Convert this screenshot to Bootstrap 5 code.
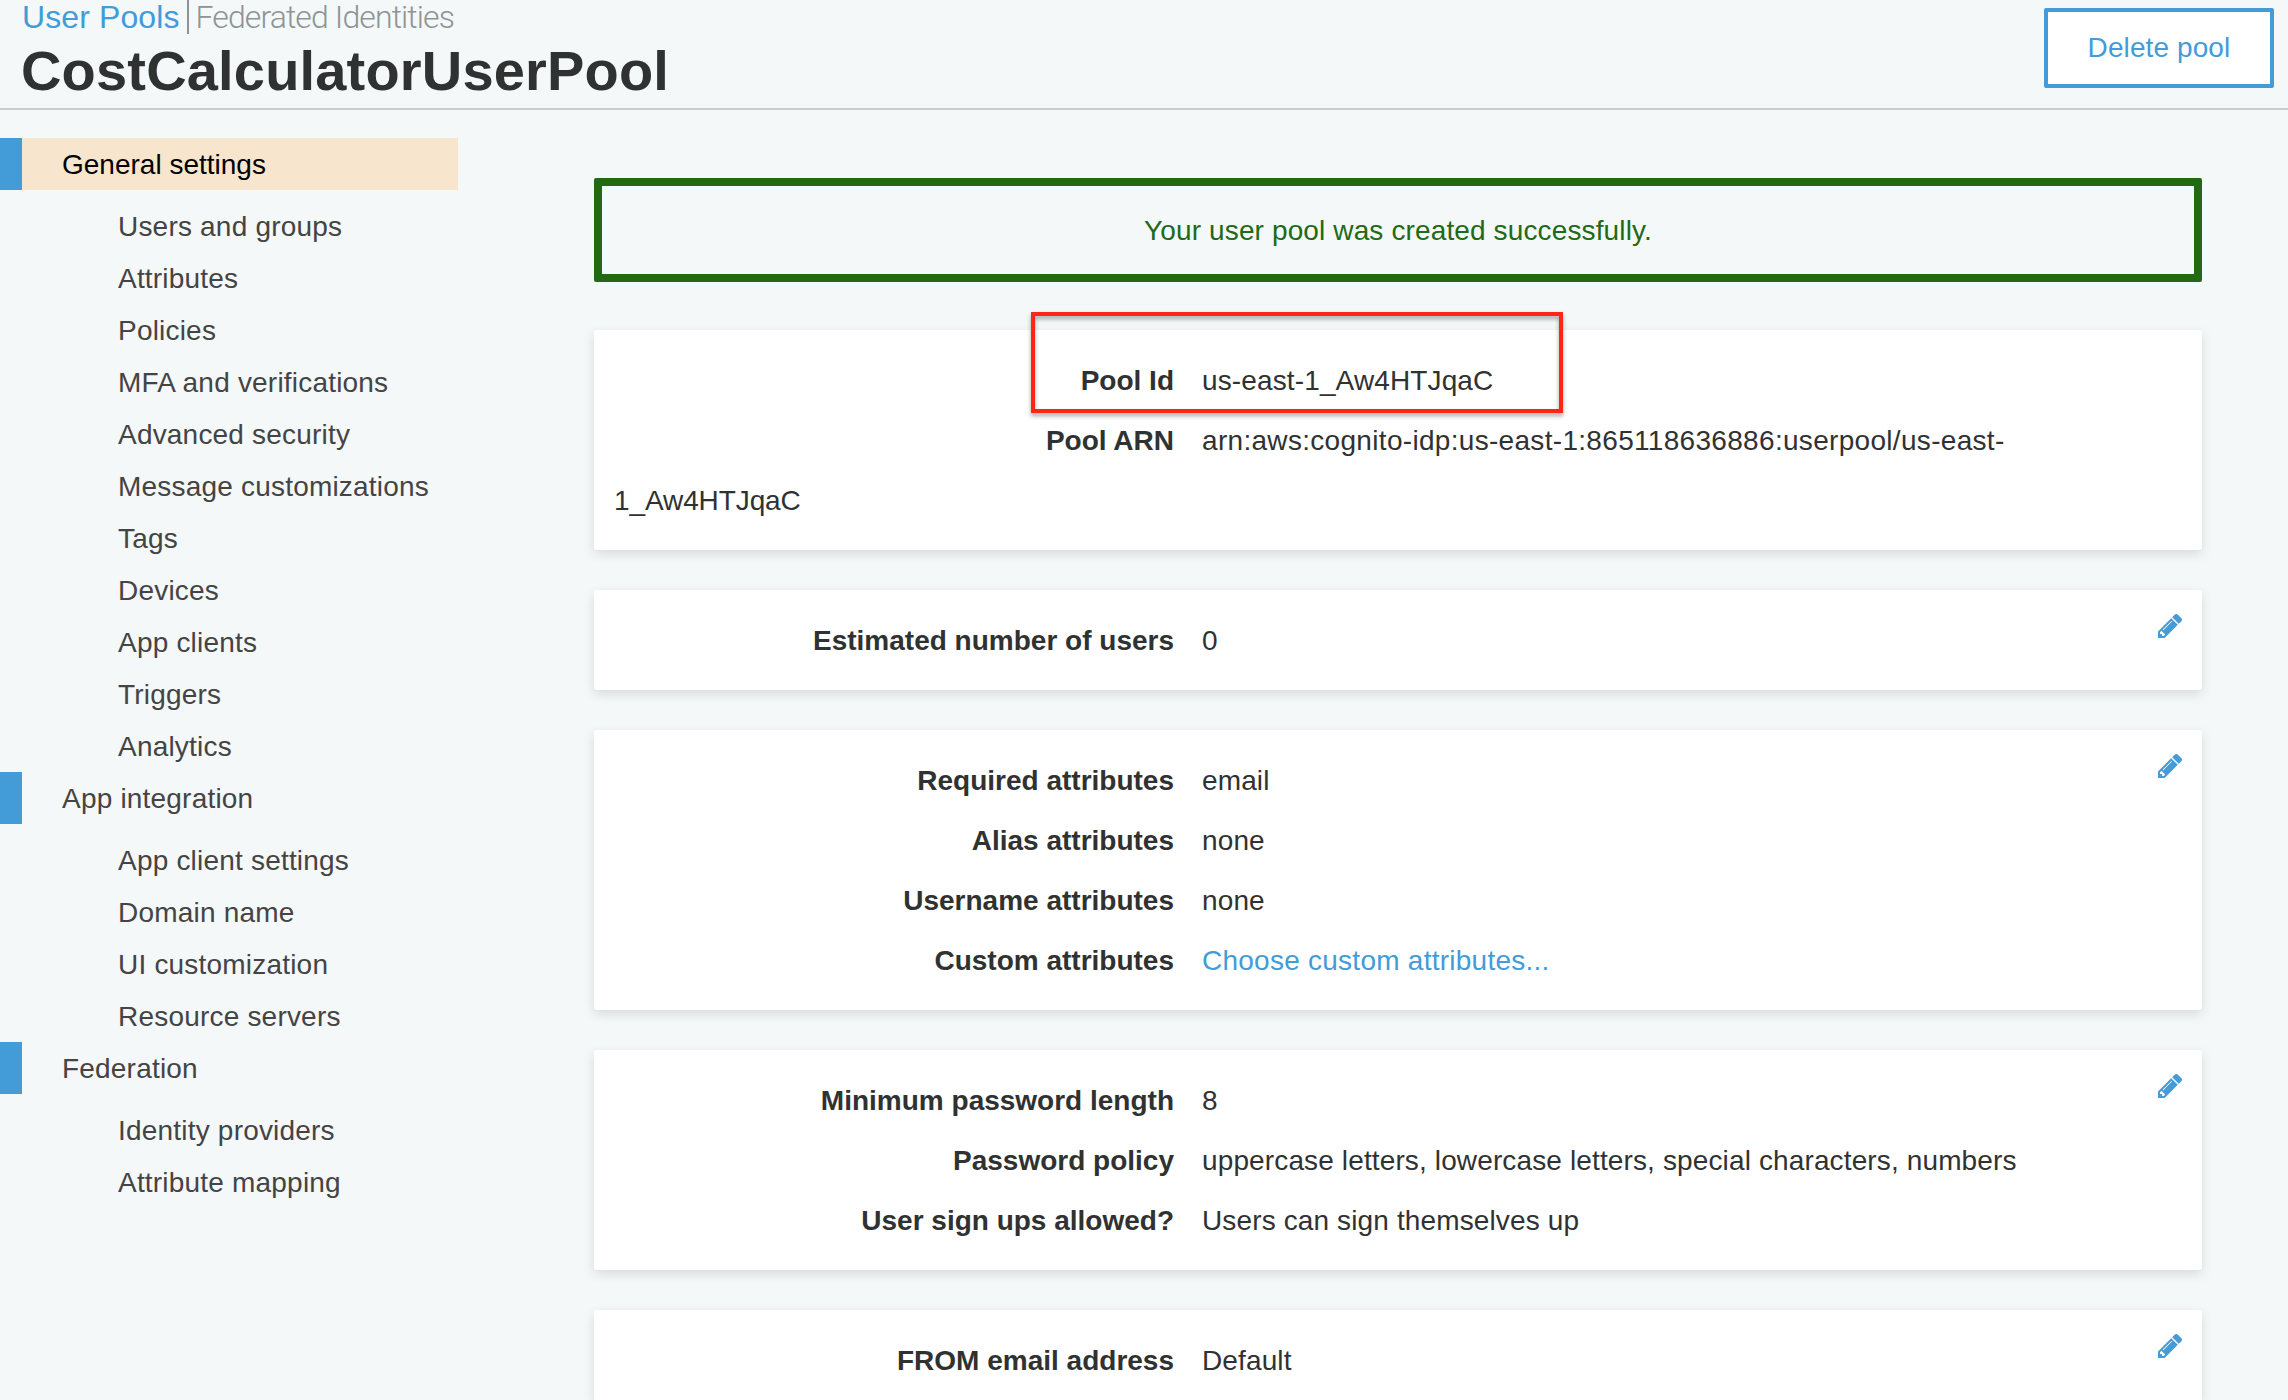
<!DOCTYPE html>
<html lang="en">
<head>
<meta charset="utf-8">
<title>CostCalculatorUserPool - User Pools</title>
<link href="https://cdn.jsdelivr.net/npm/bootstrap@5.3.0/dist/css/bootstrap.min.css" rel="stylesheet">
<style>
  body { font-family: "Liberation Sans", Arial, sans-serif; font-size: 28px; line-height: 52px; background: #f4f8f9; color: #303232; height: 1400px; overflow: hidden; letter-spacing: .13px; }
  a { color: #439bd8; text-decoration: none; }
  .topbar { height: 110px; border-bottom: 2px solid #ccc; padding: 0 14px 0 22px; }
  .crumbs { font-size: 32px; line-height: 34px; height: 34px; letter-spacing: .1px; }
  .crumbs .current-tab { border-left: 2px solid #8e9494; margin-left: 7px; padding-left: 7px; }
  .crumbs .other-tab { font-family: Roboto, "Liberation Sans", sans-serif; font-weight: 300; color: #8e9494; letter-spacing: -.9px; }
  .pool-title { font-size: 56px; line-height: 64px; font-weight: 700; letter-spacing: .18px; margin: 5px 0 0 -1px; }
  .btn-delete { height: 80px; width: 230px; margin-top: 8px; border: 4px solid #439bd8; border-radius: 2px; background: #fff; color: #439bd8; font-size: 28px; line-height: 72px; letter-spacing: .1px; }
  .side { width: 458px; margin-top: 28px; letter-spacing: .2px; line-height: 54px; }
  .side a { color: #444; display: block; height: 52px; }
  .side .section-link { border-left: 22px solid #439bd8; padding-left: 40px; }
  .side .section-link.current { background: #f7e5ce; color: #000; letter-spacing: 0; }
  .side ul { margin: 10px 0 0; padding-left: 118px; }
  .main-col { width: 1608px; margin-left: 136px; margin-top: 68px; }
  .created-alert { height: 104px; border: 8px solid #216a14; border-radius: 2px; color: #216a14; line-height: 90px; margin-bottom: 48px; }
  .panel { background: #fff; border-radius: 3px; padding: 21px 20px 19px; line-height: 60px; margin-bottom: 40px; box-shadow: 0 4px 12px rgba(0,0,0,.12); }
  .panel-last { height: 90px; padding-bottom: 0; margin-bottom: 0; border-radius: 3px 3px 0 0; }
  .field-label { display: inline-block; width: 560px; margin-right: 28px; text-align: right; font-weight: 700; letter-spacing: 0; }
  .arn { letter-spacing: .31px; }
  .arn-end { letter-spacing: -.1px; }
  .choose { letter-spacing: .25px; }
  .edit-icon { top: 24px; right: 20px; width: 24px; height: 24px; fill: #439bd8; }
  .highlight-box { left: 437px; top: -18px; width: 532px; height: 101px; border: 4px solid #ff2618; filter: drop-shadow(0 3px 2px rgba(0,0,0,.35)); }
</style>
</head>
<body>
<svg class="d-none">
  <symbol id="pencil" viewBox="128 149 1515 1515"><path d="M491 1536l91-91-235-235-91 91v107h128v128h107zm523-928q0-22-22-22-10 0-17 7l-542 542q-7 7-7 17 0 22 22 22 10 0 17-7l542-542q7-7 7-17zm-54-192l416 416-832 832h-416v-416zm683 96q0 53-37 90l-166 166-416-416 166-165q36-38 90-38 53 0 91 38l235 234q37 39 37 91z"/></symbol>
</svg>
<header class="topbar d-flex justify-content-between align-items-start">
  <div>
    <div class="crumbs d-flex"><a href="#">User Pools</a><span class="current-tab"><span class="other-tab">Federated Identities</span></span></div>
    <h1 class="pool-title">CostCalculatorUserPool</h1>
  </div>
  <button class="btn btn-delete p-0" type="button">Delete pool</button>
</header>
<div class="d-flex align-items-start">
  <nav class="side flex-shrink-0">
    <a class="section-link current" href="#">General settings</a>
    <ul class="list-unstyled">
      <li><a href="#">Users and groups</a></li>
      <li><a href="#">Attributes</a></li>
      <li><a href="#">Policies</a></li>
      <li><a href="#">MFA and verifications</a></li>
      <li><a href="#">Advanced security</a></li>
      <li><a href="#">Message customizations</a></li>
      <li><a href="#">Tags</a></li>
      <li><a href="#">Devices</a></li>
      <li><a href="#">App clients</a></li>
      <li><a href="#">Triggers</a></li>
      <li><a href="#">Analytics</a></li>
    </ul>
    <a class="section-link" href="#">App integration</a>
    <ul class="list-unstyled">
      <li><a href="#">App client settings</a></li>
      <li><a href="#">Domain name</a></li>
      <li><a href="#">UI customization</a></li>
      <li><a href="#">Resource servers</a></li>
    </ul>
    <a class="section-link" href="#">Federation</a>
    <ul class="list-unstyled">
      <li><a href="#">Identity providers</a></li>
      <li><a href="#">Attribute mapping</a></li>
    </ul>
  </nav>
  <main class="main-col flex-shrink-0">
    <div class="created-alert text-center">Your user pool was created successfully.</div>
    <section class="panel position-relative">
      <div><span class="field-label">Pool Id</span><span>us-east-1_Aw4HTJqaC</span></div>
      <div><span class="field-label">Pool ARN</span><span class="arn">arn:aws:cognito-idp:us-east-1:865118636886:userpool/us-east-</span><br><span class="arn-end">1_Aw4HTJqaC</span></div>
      <div class="highlight-box position-absolute"></div>
    </section>
    <section class="panel position-relative">
      <svg class="edit-icon position-absolute"><use href="#pencil"/></svg>
      <div><span class="field-label">Estimated number of users</span><span>0</span></div>
    </section>
    <section class="panel position-relative">
      <svg class="edit-icon position-absolute"><use href="#pencil"/></svg>
      <div><span class="field-label">Required attributes</span><span>email</span></div>
      <div><span class="field-label">Alias attributes</span><span>none</span></div>
      <div><span class="field-label">Username attributes</span><span>none</span></div>
      <div><span class="field-label">Custom attributes</span><a class="choose" href="#">Choose custom attributes...</a></div>
    </section>
    <section class="panel position-relative">
      <svg class="edit-icon position-absolute"><use href="#pencil"/></svg>
      <div><span class="field-label">Minimum password length</span><span>8</span></div>
      <div><span class="field-label">Password policy</span><span>uppercase letters, lowercase letters, special characters, numbers</span></div>
      <div><span class="field-label">User sign ups allowed?</span><span>Users can sign themselves up</span></div>
    </section>
    <section class="panel panel-last position-relative">
      <svg class="edit-icon position-absolute"><use href="#pencil"/></svg>
      <div><span class="field-label">FROM email address</span><span>Default</span></div>
    </section>
  </main>
</div>
<script src="https://cdn.jsdelivr.net/npm/bootstrap@5.3.0/dist/js/bootstrap.bundle.min.js"></script>
</body>
</html>
